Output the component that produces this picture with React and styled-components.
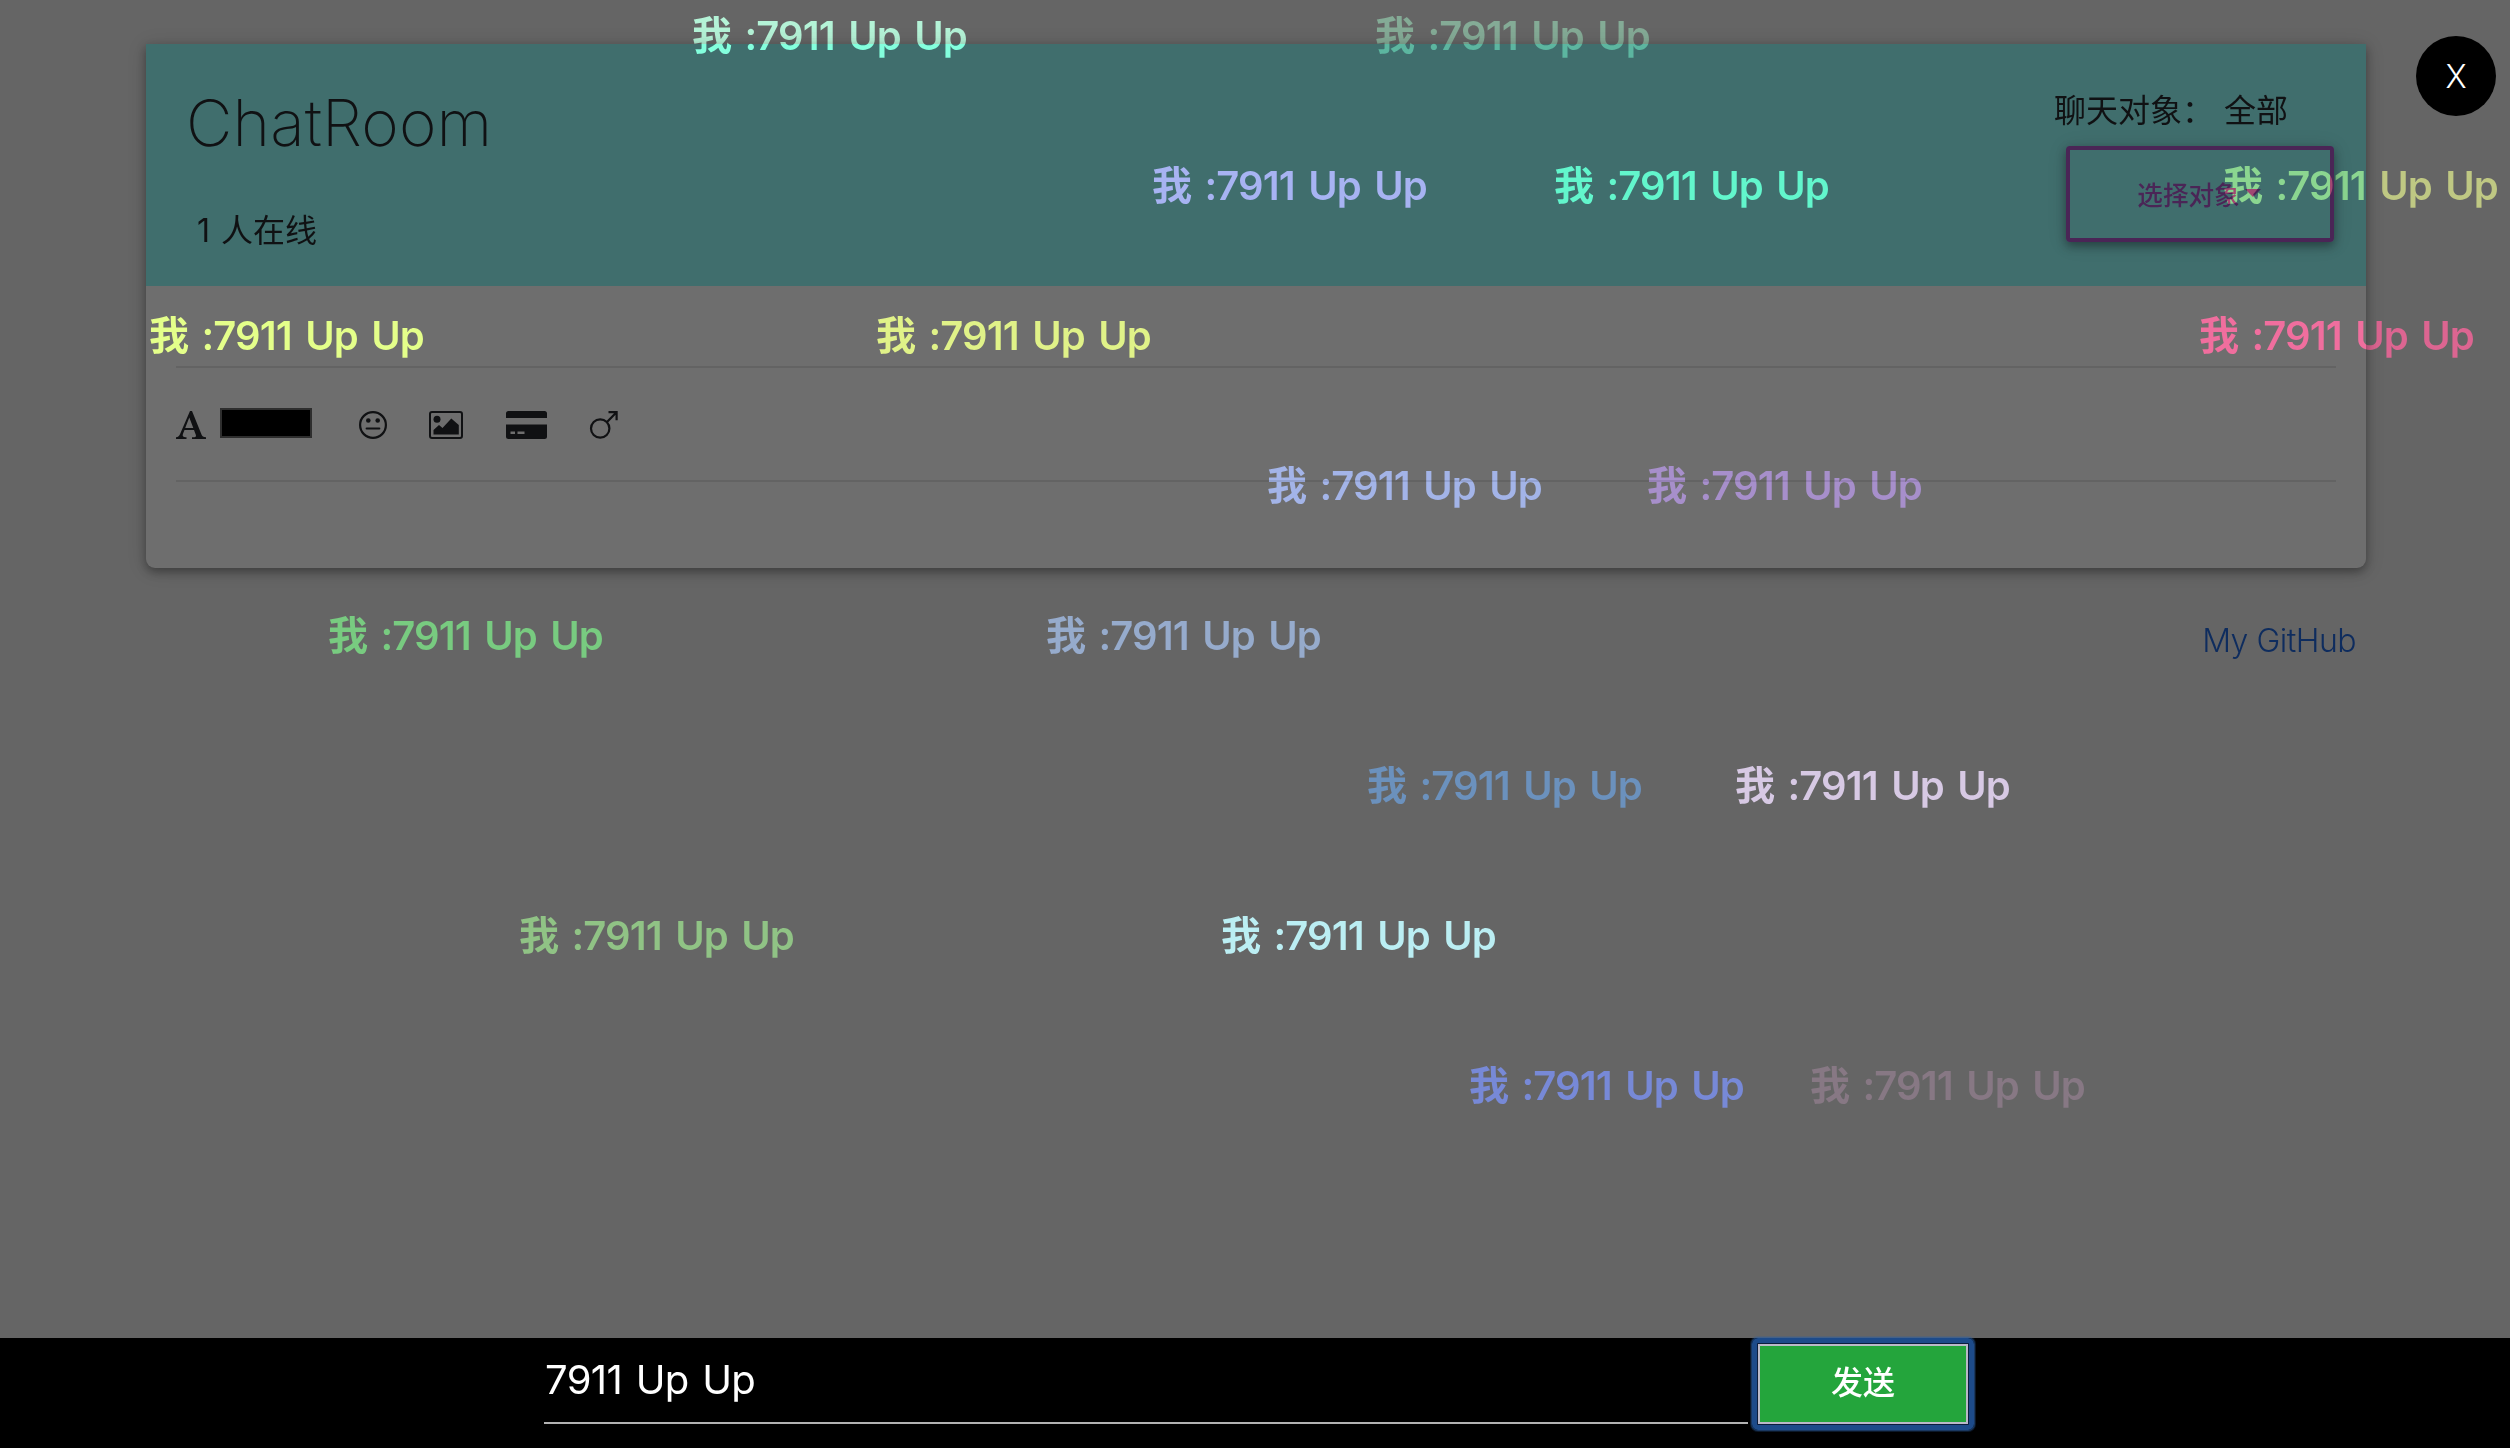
import React from "react";
import styled, { createGlobalStyle } from "styled-components";

const Global = createGlobalStyle`
  *, *::before, *::after { box-sizing: border-box; }
  body {
    margin: 0;
    background: #656565;
    color: #101113;
    font-family: Inter, "Noto Sans CJK SC", sans-serif;
    font-size: 32px;
    font-weight: 300;
    overflow: hidden;
  }
`;

const Page = styled.div`
  display: flex;
  flex-direction: column;
  height: 1448px;
  position: relative;
  overflow: hidden;
  background: #656565;
`;

const Main = styled.main`
  flex: 1;
  padding: 44px 144px 0 146px;
`;

const Card = styled.section`
  height: 524px;
  border-radius: 0 0 9px 9px;
  background: #6e6e6e;
  box-shadow: 0 4px 10px rgba(0, 0, 0, 0.32), 0 2px 20px rgba(0, 0, 0, 0.14);
`;

const Header = styled.header`
  height: 242px;
  display: flex;
  justify-content: space-between;
  padding: 41px 32px 0 40px;
  background: #406e6d;
`;

const Title = styled.h1`
  margin: 0;
  font-size: 64px;
  line-height: 76px;
  font-weight: 220;
  letter-spacing: 0.1px;
`;

const Online = styled.p`
  margin: 46px 0 0 11px;
  font-size: 32px;
  line-height: 48px;
  font-weight: 400;
  word-spacing: 2px;
`;

const Target = styled.div`
  display: flex;
  flex-direction: column;
  align-items: flex-end;
`;

const TargetLabel = styled.div`
  display: flex;
  gap: 10px;
  height: 61px;
  margin-right: 46px;
  padding-top: 2px;
  line-height: 48px;
  font-weight: 400;
`;

const SelectButton = styled.button`
  width: 268px;
  height: 96px;
  display: flex;
  align-items: center;
  justify-content: center;
  gap: 5px;
  padding: 0 2px 2px 0;
  border: 4px solid #4a2556;
  border-radius: 4px;
  background: transparent;
  color: #4a2556;
  font: 500 25.6px Inter, "Noto Sans CJK SC", sans-serif;
  box-shadow: 0 4px 10px rgba(0, 0, 0, 0.35), 0 2px 20px rgba(0, 0, 0, 0.12);
`;

const Caret = styled.span`
  border: 8px solid transparent;
  border-top-color: currentColor;
  border-bottom: 0;
`;

const Body = styled.div`
  padding: 80px 30px 0;
`;

const Toolbar = styled.div`
  display: flex;
  align-items: center;
  height: 116px;
  padding-top: 1px;
  border-top: 2px solid #636363;
  border-bottom: 2px solid #636363;
`;

const Tool = styled.svg`
  display: block;
  width: ${(p) => p.$w}px;
  height: 28px;
  margin-left: ${(p) => p.$gap || 0}px;
  overflow: visible;
`;

const Swatch = styled.span`
  width: 92px;
  height: 30px;
  margin: 0 0 3px 14px;
  border: 2px solid #2e2e2e;
  background: #000;
`;

const RepoLink = styled.a`
  display: block;
  width: fit-content;
  margin: 49px 10px 0 auto;
  line-height: 48px;
  letter-spacing: -0.5px;
  color: #0e2c5e;
  text-decoration: none;
`;

const Footer = styled.footer`
  height: 110px;
  display: flex;
  align-items: flex-start;
  padding: 6px 0 0 544px;
  background: #000;
`;

const Input = styled.input`
  width: 1204px;
  height: 80px;
  padding: 0 0 8px 1px;
  border: 0;
  border-bottom: 2px solid #b2b2b2;
  outline: 0;
  background: transparent;
  color: #fff;
  font: 430 40px Inter, sans-serif;
  letter-spacing: -0.6px;
  word-spacing: 2.8px;
`;

const Send = styled.button`
  position: relative;
  width: 210px;
  height: 80px;
  margin-left: 10px;
  padding: 0 0 8px;
  border: 2px solid #bab9c8;
  border-radius: 0;
  background: #24a53c;
  color: #fff;
  font: 500 32px "Noto Sans CJK SC", sans-serif;
  box-shadow: 0 0 0 1px #0c1d3c;

  &::after {
    content: "";
    position: absolute;
    inset: -8px;
    border: 5px solid #1d4b8a;
    border-radius: 6px;
    box-shadow: 0 0 0 1px rgba(45, 95, 165, 0.45), 0 0 0 2px rgba(45, 95, 165, 0.25);
  }
`;

const Close = styled.button`
  position: absolute;
  top: 36px;
  left: 2416px;
  width: 80px;
  height: 80px;
  padding: 0;
  border: 0;
  border-radius: 50%;
  background: #000;
  color: #fff;
  font: 300 32px Inter, sans-serif;
`;

const Bullet = styled.span`
  position: absolute;
  left: ${(p) => p.$x}px;
  top: ${(p) => p.$row * 150}px;
  line-height: 72px;
  font-size: 40px;
  font-weight: 620;
  letter-spacing: -0.9px;
  word-spacing: 4.2px;
  white-space: pre;
  color: transparent;
  background: ${(p) => p.$fill};
  background-clip: text;
  -webkit-background-clip: text;
  mix-blend-mode: color-dodge;
`;

/* Dodge source that lifts the page backdrop to the wanted colour. */
const dodge = (want, base) =>
  `rgb(${want.map((v, i) => Math.max(0, Math.round(255 * (1 - base[i] / v)))).join(",")})`;

const solid = (want, base) => {
  const c = dodge(want, base);
  return `linear-gradient(${c}, ${c})`;
};

const split = (dir, at, a, b) =>
  `linear-gradient(${dir}, ${dodge(...a)} ${at}px, ${dodge(...b)} ${at}px)`;

const GREY = [101, 101, 101];
const CARD = [110, 110, 110];
const TEAL = [64, 110, 109];

const bullets = [
  [692, 0, split("to bottom", 44, [[180, 244, 214], GREY], [[131, 255, 220], TEAL])],
  [1375, 0, split("to bottom", 44, [[132, 171, 150], GREY], [[92, 182, 160], TEAL])],
  [1152, 1, solid([167, 179, 242], TEAL)],
  [1554, 1, solid([98, 245, 205], TEAL)],
  [2223, 1, split("to right", 143, [[140, 214, 144], TEAL], [[191, 199, 131], GREY])],
  [149, 2, solid([228, 255, 138], CARD)],
  [876, 2, solid([225, 241, 136], CARD)],
  [2199, 2, solid([239, 110, 158], CARD)],
  [1267, 3, solid([163, 180, 232], CARD)],
  [1647, 3, solid([167, 143, 203], CARD)],
  [328, 4, solid([120, 203, 128], GREY)],
  [1046, 4, solid([150, 171, 205], GREY)],
  [1367, 5, solid([107, 145, 189], GREY)],
  [1735, 5, solid([214, 201, 228], GREY)],
  [519, 6, solid([144, 195, 133], GREY)],
  [1221, 6, solid([186, 239, 242], GREY)],
  [1469, 7, solid([119, 137, 214], GREY)],
  [1810, 7, solid([135, 120, 132], GREY)],
];

export default function App() {
  return (
    <Page>
      <Global />
      <Main>
        <Card>
          <Header>
            <div>
              <Title>ChatRoom</Title>
              <Online>1 人在线</Online>
            </div>
            <Target>
              <TargetLabel>
                <span>聊天对象：</span>
                <span>全部</span>
              </TargetLabel>
              <SelectButton>
                选择对象
                <Caret />
              </SelectButton>
            </Target>
          </Header>
          <Body>
            <Toolbar>
              <Tool $w={30} viewBox="0 0 30 28" fill="#101113">
                <path fillRule="evenodd" d="M14 0h2l9.5 23.5c.8 2 1.7 2.6 4.500 2.800V28H16v-1.700c4-.1 4.500-.8 3.600-3.100L18 19H8.500l-1.400 3.500c-1 2.700-.2 3.600 3.400 3.800V28H0v-1.700c2.300-.3 3.200-1.200 4.200-3.600zM13.300 6.500L9.200 17h8.100z" />
              </Tool>
              <Swatch />
              <Tool $w={28} $gap={47} viewBox="0 0 28 28" fill="none" stroke="#101113" strokeWidth="2.200">
                <ellipse cx="14" cy="14" rx="12.900" ry="12.900" />
                <circle cx="9.300" cy="9.500" r="2.300" fill="#101113" stroke="none" />
                <circle cx="18.700" cy="9.500" r="2.300" fill="#101113" stroke="none" />
                <path d="M7.700 17.500h12.600" strokeLinecap="round" />
              </Tool>
              <Tool $w={34} $gap={42} viewBox="0 0 34 28" fill="#101113">
                <rect x="1" y="1" width="32" height="26" rx="2" fill="none" stroke="#101113" strokeWidth="2" />
                <circle cx="8" cy="8.300" r="3.500" />
                <path d="M4.500 23.500v-4.500l5.500-5 3.500 3L22.300 7.500l7.500 6.500v9.500z" />
              </Tool>
              <Tool $w={41} $gap={43} viewBox="0 0 41 28" fill="#101113">
                <path d="M2.500 0h36A2.500 2.500 0 0 1 41 2.500V7H0V2.500A2.500 2.500 0 0 1 2.500 0z" />
                <path fillRule="evenodd" d="M0 13.500h41v12a2.500 2.500 0 0 1-2.500 2.500h-36A2.500 2.500 0 0 1 0 25.500zM4.500 20.500v2.500h4.500v-2.500zM11.500 20.500v2.500h7v-2.500z" />
              </Tool>
              <Tool $w={28} $gap={43} viewBox="0 0 28 28" fill="none" stroke="#101113" strokeWidth="2.200">
                <circle cx="10.200" cy="17.500" r="9.200" />
                <path d="M17 11L26.500 1.200M18.500 1.200h8.100v8" />
              </Tool>
            </Toolbar>
          </Body>
        </Card>
        <RepoLink href="#">My GitHub</RepoLink>
      </Main>
      <Footer>
        <Input defaultValue="7911 Up Up" />
        <Send>发送</Send>
      </Footer>
      {bullets.map(([x, row, fill]) => (
        <Bullet key={x} $x={x} $row={row} $fill={fill}>
          我 :7911 Up Up
        </Bullet>
      ))}
      <Close>X</Close>
    </Page>
  );
}
